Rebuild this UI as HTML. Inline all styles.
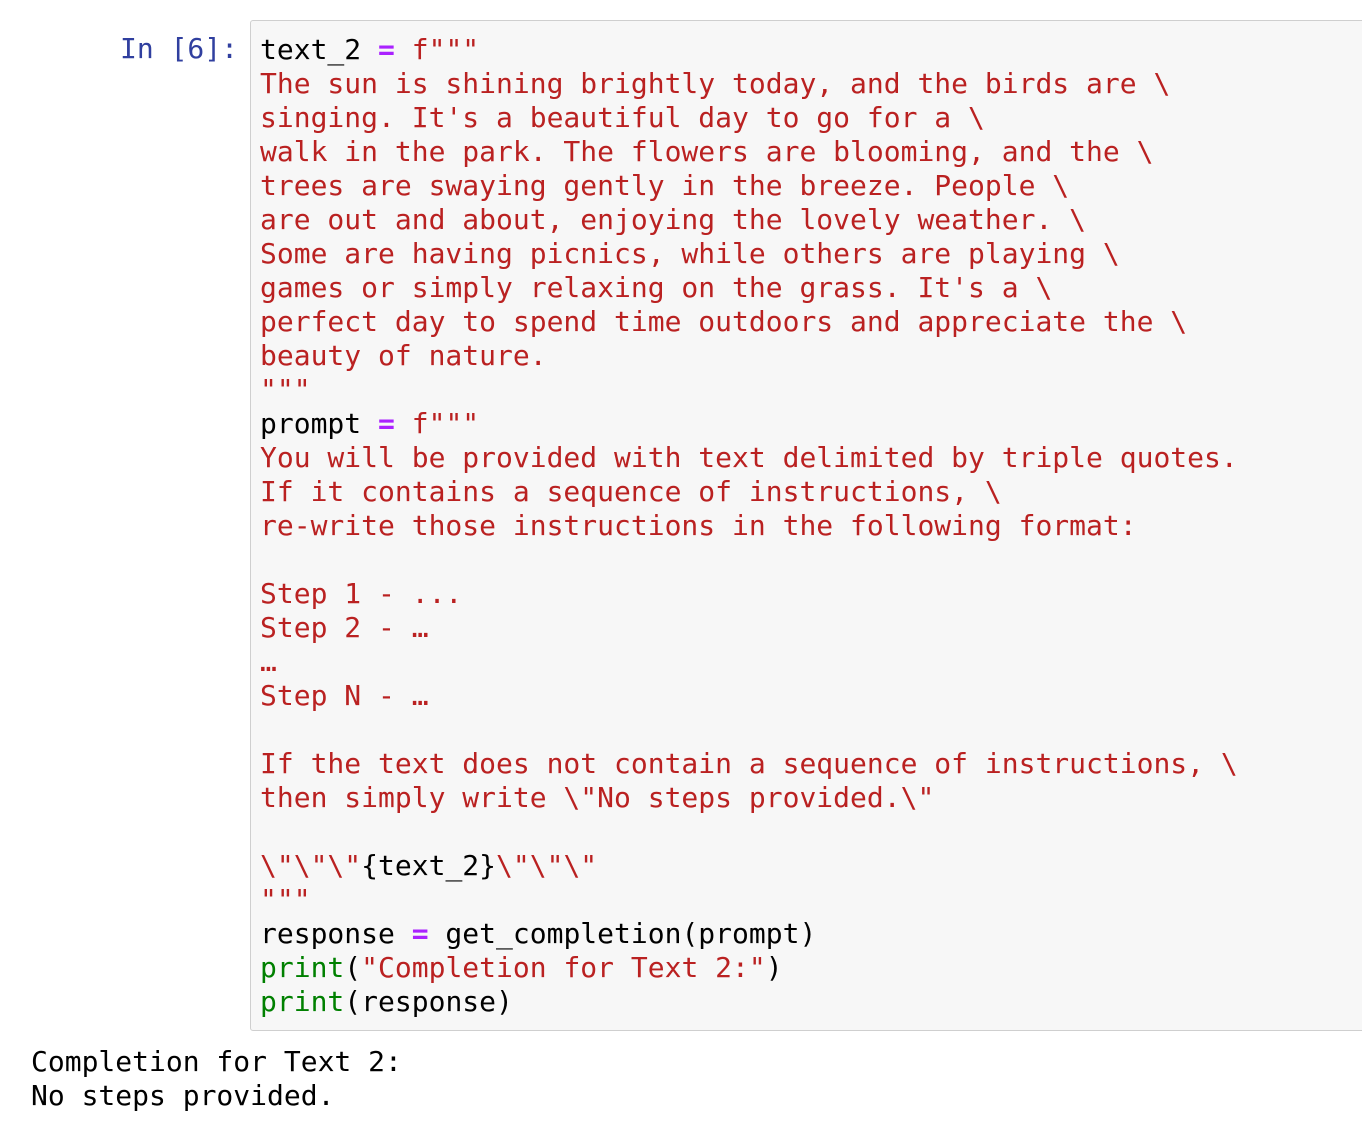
<!DOCTYPE html>
<html><head><meta charset="utf-8">
<style>
html,body{margin:0;padding:0;background:#fff;width:1362px;height:1136px;overflow:hidden}
body{font-family:"DejaVu Sans Mono","Liberation Mono",monospace;font-size:28px;line-height:34px;color:#000}
.prompt{position:absolute;left:120px;top:32px;color:#303f9f;white-space:pre}
.cell{position:absolute;left:250px;top:20px;width:1130px;height:1011px;background:#f7f7f7;border:1px solid #cfcfcf;border-radius:3px;box-sizing:border-box}
pre{margin:0;font:inherit;white-space:pre}
.code{position:absolute;left:260px;top:33px}
.s{color:#ba2121}.o{color:#aa22ff;font-weight:bold}.b{color:#008000}
.out{position:absolute;left:31px;top:1045px}
</style></head><body>
<div class="prompt">In [6]:</div>
<div class="cell"></div>
<pre class="code">text_2 <span class="o">=</span> <span class="s">f"""
The sun is shining brightly today, and the birds are \
singing. It's a beautiful day to go for a \
walk in the park. The flowers are blooming, and the \
trees are swaying gently in the breeze. People \
are out and about, enjoying the lovely weather. \
Some are having picnics, while others are playing \
games or simply relaxing on the grass. It's a \
perfect day to spend time outdoors and appreciate the \
beauty of nature.
"""</span>
prompt <span class="o">=</span> <span class="s">f"""
You will be provided with text delimited by triple quotes.
If it contains a sequence of instructions, \
re-write those instructions in the following format:

Step 1 - ...
Step 2 - …
…
Step N - …

If the text does not contain a sequence of instructions, \
then simply write \"No steps provided.\"

\"\"\"</span>{text_2}<span class="s">\"\"\"
"""</span>
response <span class="o">=</span> get_completion(prompt)
<span class="b">print</span>(<span class="s">"Completion for Text 2:"</span>)
<span class="b">print</span>(response)</pre>
<pre class="out">Completion for Text 2:
No steps provided.</pre>
</body></html>
